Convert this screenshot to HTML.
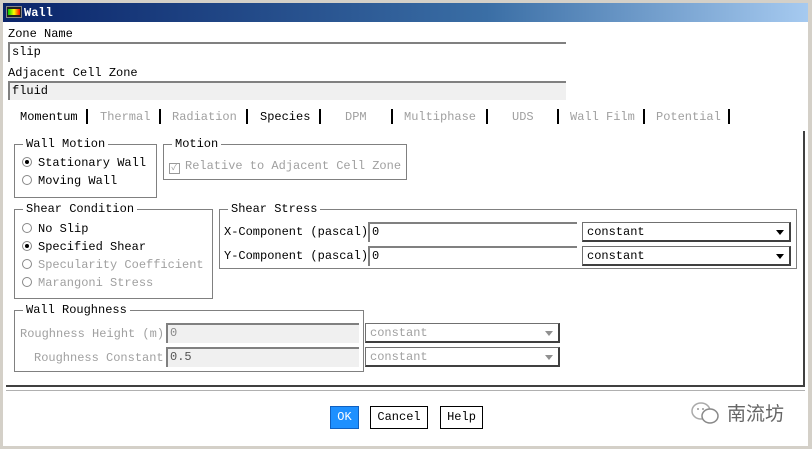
<!DOCTYPE html>
<html><head><meta charset="utf-8"><style>
*{box-sizing:border-box;margin:0;padding:0}
body{width:812px;height:449px;background:#d4d0c8;position:relative;overflow:hidden;font-family:"Liberation Mono","Noto Sans CJK SC",monospace;font-size:12px;color:#000}
.a{position:absolute;white-space:nowrap;line-height:14px}
.win{position:absolute;left:3px;top:3px;width:805px;height:443px;background:#fff}
.title{position:absolute;left:3px;top:3px;width:805px;height:19px;background:linear-gradient(90deg,#0a246a,#3a6ea5 60%,#a6caf0);color:#fff;font-weight:bold;font-family:"Liberation Mono",monospace;font-size:12px}
.fld{position:absolute;border-top:2px solid #808080;border-left:2px solid #808080;background:#fff;padding-left:2px;line-height:17px}
.g{color:#a0a0a0}
.box{position:absolute;border:1px solid #808080}
.lg{position:absolute;top:-8px;left:8px;background:#fff;padding:0 3px;line-height:14px}
.dd{position:absolute;border:1px solid #707070;border-right:2px solid #404040;border-bottom:2px solid #404040;background:#fff;padding-left:4px;line-height:18px;font-size:12px}
.dd:after{content:"";position:absolute;right:5px;top:7px;border-left:4px solid transparent;border-right:4px solid transparent;border-top:5px solid #000}
.dd.g:after{border-top-color:#909090}
.sep{position:absolute;width:2px;height:15px;background:#000;top:109px}
.rad{display:inline-block;width:10px;height:10px;border-radius:50%;border:1px solid #888;vertical-align:-1px;margin-right:6px;position:relative}
.rad.on:after{content:"";position:absolute;left:2px;top:2px;width:4px;height:4px;border-radius:50%;background:#000}
.btn{position:absolute;top:406px;height:23px;border:1px solid #000;background:#fff;text-align:center;line-height:21px}
</style></head><body>
<div class="win"></div>
<div class="title"><span style="position:absolute;left:3px;top:3px;width:16px;height:12px;background:#222;border:1px solid #888"><span style="position:absolute;left:1px;top:2px;width:12px;height:6px;background:linear-gradient(90deg,#0c0,#ff0,#f00)"></span></span><span class="a" style="left:21px;top:3px">Wall</span></div>
<div class="a" style="left:8px;top:27px">Zone Name</div>
<div class="fld" style="left:8px;top:42px;width:558px;height:20px">slip</div>
<div class="a" style="left:8px;top:66px">Adjacent Cell Zone</div>
<div class="fld" style="left:8px;top:81px;width:558px;height:19px;background:#f0f0f0">fluid</div>
<div class="a" style="left:20px;top:110px">Momentum</div>
<div class="sep" style="left:86px"></div>
<div class="a g" style="left:100px;top:110px">Thermal</div>
<div class="sep" style="left:159px"></div>
<div class="a g" style="left:172px;top:110px">Radiation</div>
<div class="sep" style="left:246px"></div>
<div class="a" style="left:260px;top:110px">Species</div>
<div class="sep" style="left:319px"></div>
<div class="a g" style="left:345px;top:110px">DPM</div>
<div class="sep" style="left:391px"></div>
<div class="a g" style="left:404px;top:110px">Multiphase</div>
<div class="sep" style="left:486px"></div>
<div class="a g" style="left:512px;top:110px">UDS</div>
<div class="sep" style="left:557px"></div>
<div class="a g" style="left:570px;top:110px">Wall Film</div>
<div class="sep" style="left:643px"></div>
<div class="a g" style="left:656px;top:110px">Potential</div>
<div class="sep" style="left:728px"></div>
<div style="position:absolute;left:803px;top:131px;width:2px;height:256px;background:#404040"></div>
<div style="position:absolute;left:6px;top:385px;width:799px;height:2px;background:#404040"></div>
<div style="position:absolute;left:6px;top:390px;width:799px;height:1px;background:#b0b0b0"></div>

<div class="box" style="left:14px;top:144px;width:143px;height:54px"><span class="lg">Wall Motion</span>
<div class="a" style="left:7px;top:11px"><span class="rad on"></span>Stationary Wall</div>
<div class="a" style="left:7px;top:29px"><span class="rad"></span>Moving Wall</div></div>
<div class="box" style="left:163px;top:144px;width:244px;height:36px"><span class="lg">Motion</span>
<div class="a g" style="left:5px;top:14px"><span style="display:inline-block;width:11px;height:11px;border:1px solid #999;vertical-align:-1px;margin-right:5px;font-size:9px;line-height:9px;text-align:center">✓</span>Relative to Adjacent Cell Zone</div></div>

<div class="box" style="left:14px;top:209px;width:199px;height:90px"><span class="lg">Shear Condition</span>
<div class="a" style="left:7px;top:12px"><span class="rad"></span>No Slip</div>
<div class="a" style="left:7px;top:30px"><span class="rad on"></span>Specified Shear</div>
<div class="a g" style="left:7px;top:48px"><span class="rad"></span>Specularity Coefficient</div>
<div class="a g" style="left:7px;top:66px"><span class="rad"></span>Marangoni Stress</div></div>
<div class="box" style="left:219px;top:209px;width:578px;height:60px"><span class="lg">Shear Stress</span>
<div class="a" style="left:4px;top:15px">X-Component (pascal)</div>
<div class="a" style="left:4px;top:39px">Y-Component (pascal)</div></div>
<div class="fld" style="left:368px;top:222px;width:209px;height:20px">0</div>
<div class="fld" style="left:368px;top:246px;width:209px;height:20px">0</div>
<div class="dd" style="left:582px;top:222px;width:209px;height:20px">constant</div>
<div class="dd" style="left:582px;top:246px;width:209px;height:20px">constant</div>

<div class="box" style="left:14px;top:310px;width:350px;height:62px"><span class="lg">Wall Roughness</span>
<div class="a g" style="left:5px;top:16px">Roughness Height (m)</div>
<div class="a g" style="left:19px;top:40px">Roughness Constant</div></div>
<div class="fld" style="left:166px;top:323px;width:193px;height:20px;background:#f0f0f0;color:#888">0</div>
<div class="fld" style="left:166px;top:347px;width:193px;height:20px;background:#f0f0f0;color:#555">0.5</div>
<div class="dd g" style="left:365px;top:323px;width:195px;height:20px">constant</div>
<div class="dd g" style="left:365px;top:347px;width:195px;height:20px">constant</div>

<div class="btn" style="left:330px;width:29px;background:#1e90ff;color:#fff;border-color:#1060c0">OK</div>
<div class="btn" style="left:370px;width:58px">Cancel</div>
<div class="btn" style="left:440px;width:43px">Help</div>
<svg style="position:absolute;left:690px;top:401px" width="32" height="26" viewBox="0 0 32 26"><ellipse cx="11" cy="10" rx="9" ry="8" fill="none" stroke="#aaa" stroke-width="1.5"/><ellipse cx="20" cy="15" rx="8" ry="7" fill="#fff" stroke="#888" stroke-width="1.5"/><circle cx="8" cy="8" r="1" fill="#999"/><circle cx="13" cy="8" r="1" fill="#999"/></svg>
<div class="a" style="left:727px;top:400px;font-family:'Noto Sans CJK SC',sans-serif;font-size:19px;line-height:26px;color:#666">南流坊</div>
</body></html>
